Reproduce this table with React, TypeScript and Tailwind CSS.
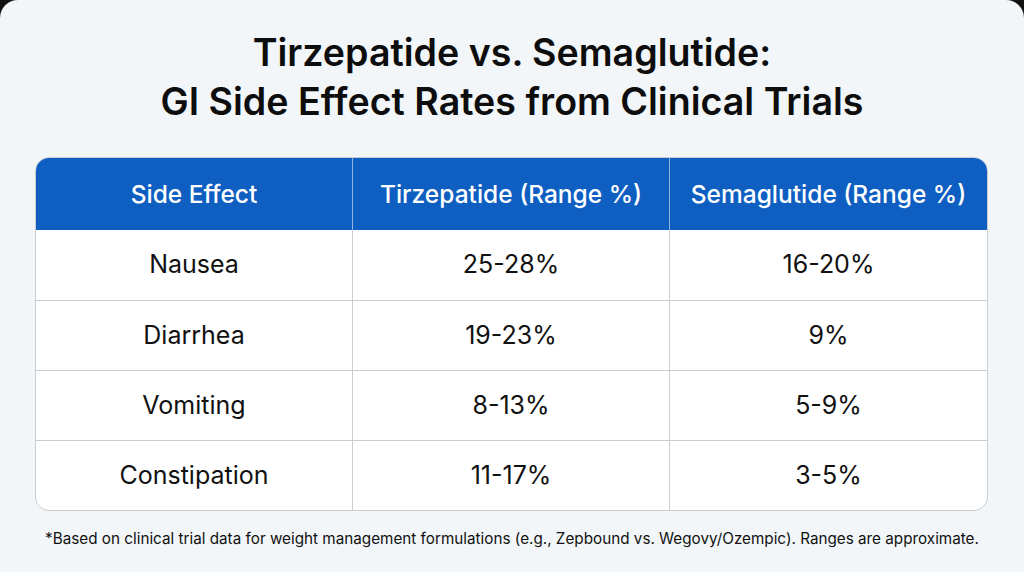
const rows = [
  { effect: 'Nausea', tirz: '25-28%', sema: '16-20%' },
  { effect: 'Diarrhea', tirz: '19-23%', sema: '9%' },
  { effect: 'Vomiting', tirz: '8-13%', sema: '5-9%' },
  { effect: 'Constipation', tirz: '11-17%', sema: '3-5%' },
];

export default function App() {
  return (
    <div className="w-[1024px] h-[572px] bg-[#111] overflow-hidden" style={{ fontFamily: 'Inter, "Noto Sans", sans-serif' }}>
      <div className="w-full h-full bg-[#f2f6f8] rounded-t-[18px] flex flex-col items-center">
        <h1 className="pt-[28px] text-[37.6px] leading-[49px] font-semibold text-[#0d0d0d] text-center">
          Tirzepatide vs. Semaglutide:
          <br />
          GI Side Effect Rates from Clinical Trials
        </h1>

        <div className="mt-[31px] w-[953px] ml-[-1px] rounded-[14px] border border-[#c9ccd0] overflow-hidden bg-white">
          <div className="grid grid-cols-3 h-[72px] bg-[#0f5fc2] text-white text-[24.5px] font-medium">
            <div className="flex items-center justify-center border-r border-[#8fb3e0]">Side Effect</div>
            <div className="flex items-center justify-center border-r border-[#8fb3e0]">Tirzepatide (Range %)</div>
            <div className="flex items-center justify-center">Semaglutide (Range %)</div>
          </div>
          {rows.map((r, i) => (
            <div
              key={r.effect}
              className={`grid grid-cols-3 h-[70px] text-[25px] text-[#111] ${i > 0 ? 'border-t border-[#c9ccd0]' : ''}`}
            >
              <div className="flex items-center justify-center border-r border-[#c9ccd0]">{r.effect}</div>
              <div className="flex items-center justify-center border-r border-[#c9ccd0]">{r.tirz}</div>
              <div className="flex items-center justify-center">{r.sema}</div>
            </div>
          ))}
        </div>

        <p className="mt-[17px] text-[15.25px] text-[#111] text-center">
          *Based on clinical trial data for weight management formulations (e.g., Zepbound vs. Wegovy/Ozempic). Ranges are approximate.
        </p>
      </div>
    </div>
  );
}
